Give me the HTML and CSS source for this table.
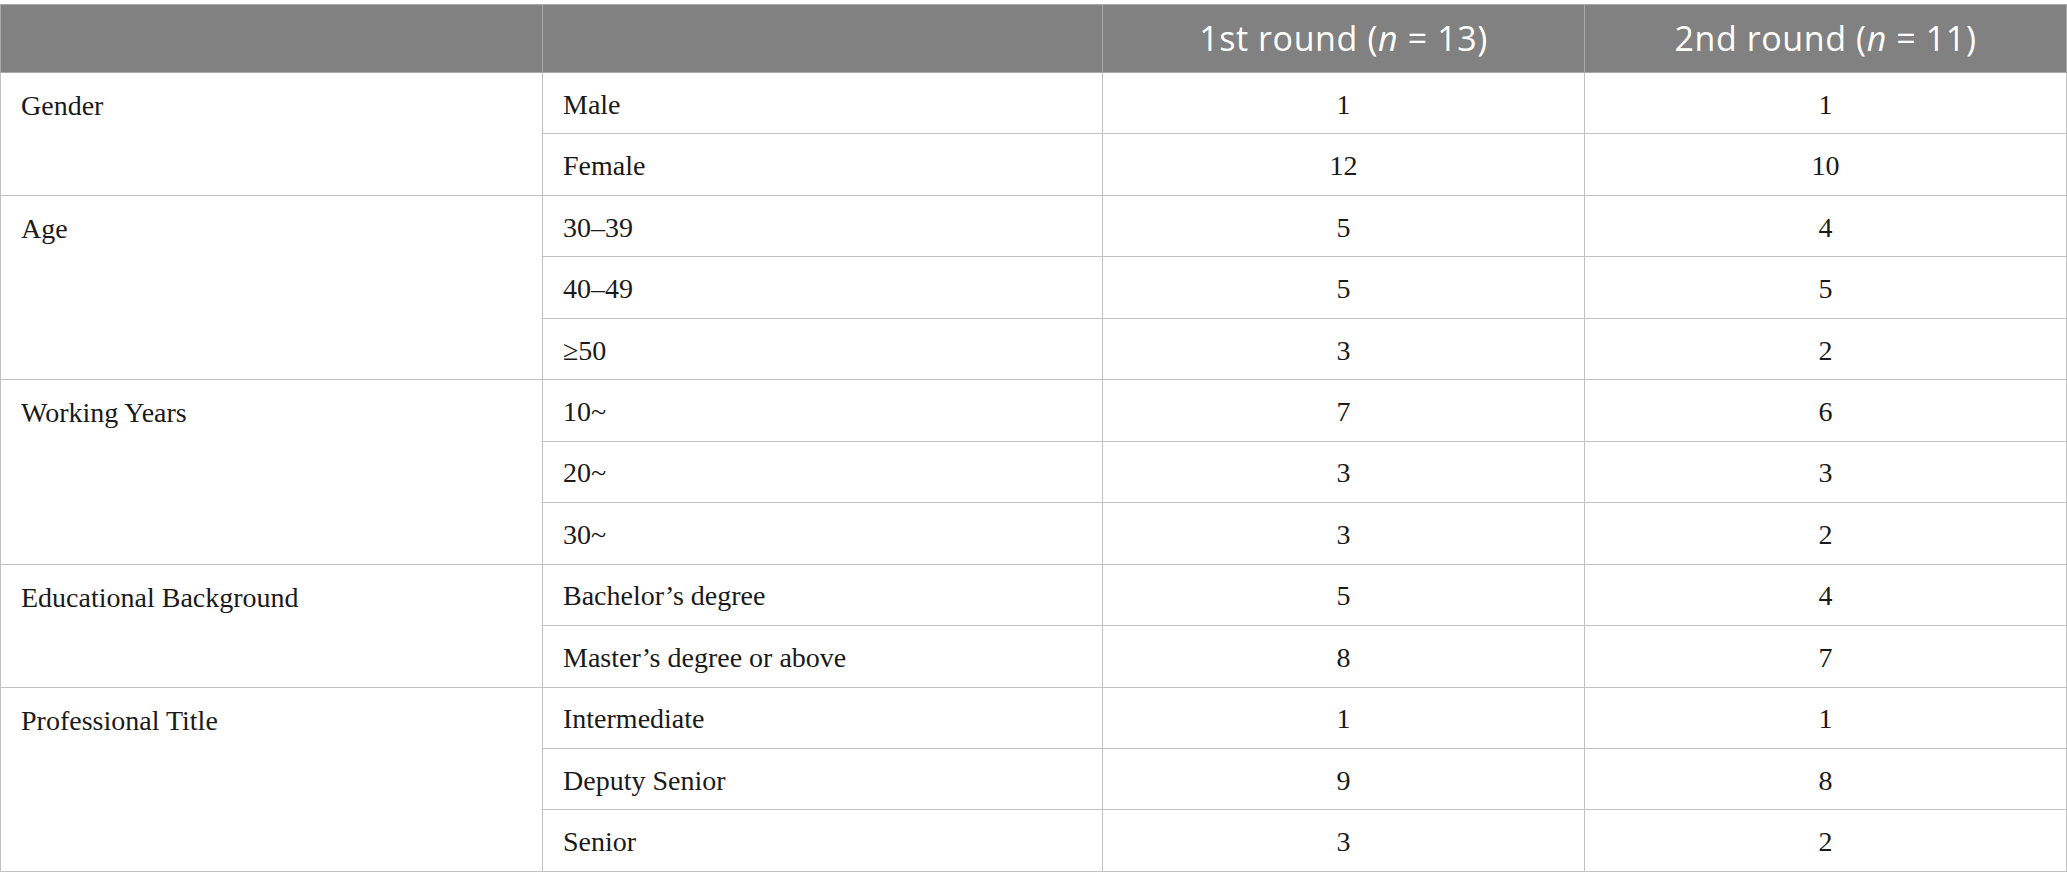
FILE: index.html
```html
<!DOCTYPE html>
<html lang="en">
<head>
<meta charset="utf-8">
<title>Participant characteristics</title>
<link rel="stylesheet" href="styles.css">
</head>
<body>
<table class="data-table">
  <colgroup>
    <col class="col-cat">
    <col class="col-sub">
    <col class="col-num">
    <col class="col-num">
  </colgroup>
  <thead>
    <tr class="head-row">
      <th></th>
      <th></th>
      <th class="num">1st round (<i>n</i> = 13)</th>
      <th class="num">2nd round (<i>n</i> = 11)</th>
    </tr>
  </thead>
  <tbody>
    <tr><td class="cat" rowspan="2">Gender</td><td>Male</td><td class="num">1</td><td class="num">1</td></tr>
    <tr><td>Female</td><td class="num">12</td><td class="num">10</td></tr>
    <tr><td class="cat" rowspan="3">Age</td><td>30–39</td><td class="num">5</td><td class="num">4</td></tr>
    <tr><td>40–49</td><td class="num">5</td><td class="num">5</td></tr>
    <tr><td>≥50</td><td class="num">3</td><td class="num">2</td></tr>
    <tr><td class="cat" rowspan="3">Working Years</td><td>10~</td><td class="num">7</td><td class="num">6</td></tr>
    <tr><td>20~</td><td class="num">3</td><td class="num">3</td></tr>
    <tr><td>30~</td><td class="num">3</td><td class="num">2</td></tr>
    <tr><td class="cat" rowspan="2">Educational Background</td><td>Bachelor’s degree</td><td class="num">5</td><td class="num">4</td></tr>
    <tr><td>Master’s degree or above</td><td class="num">8</td><td class="num">7</td></tr>
    <tr><td class="cat" rowspan="3">Professional Title</td><td>Intermediate</td><td class="num">1</td><td class="num">1</td></tr>
    <tr><td>Deputy Senior</td><td class="num">9</td><td class="num">8</td></tr>
    <tr><td>Senior</td><td class="num">3</td><td class="num">2</td></tr>
  </tbody>
</table>
</body>
</html>
```
FILE: styles.css
```css
html, body {
  margin: 0;
  padding: 0;
  background: #ffffff;
}

body {
  padding-top: 4px;
}

.data-table {
  width: 2067px;
  table-layout: fixed;
  border-collapse: collapse;
  font-family: "Liberation Serif", "Times New Roman", serif;
  font-size: 28px;
  color: #1a1a1a;
}

.col-cat { width: 542px; }
.col-sub { width: 560px; }
.col-num { width: 482px; }

.data-table th,
.data-table td {
  border: 1px solid #c2c2c2;
  padding: 0 20px;
}

.head-row {
  height: 68px;
}

.head-row th {
  background: #808180;
  color: #ffffff;
  font-family: "Open Sans", "Liberation Sans", sans-serif;
  font-weight: 400;
  font-size: 34px;
  letter-spacing: 0.6px;
  text-align: center;
  vertical-align: middle;
  border-color: #a9aaa9;
  padding-bottom: 2px;
}

.head-row th i {
  font-style: italic;
}

.data-table tbody tr {
  height: 61.46px;
}

.data-table td {
  vertical-align: middle;
  text-align: left;
  line-height: 32px;
  padding-top: 3px;
}

.data-table td.cat {
  vertical-align: top;
  padding-top: 17px;
}

.data-table td.num {
  text-align: center;
}
```
